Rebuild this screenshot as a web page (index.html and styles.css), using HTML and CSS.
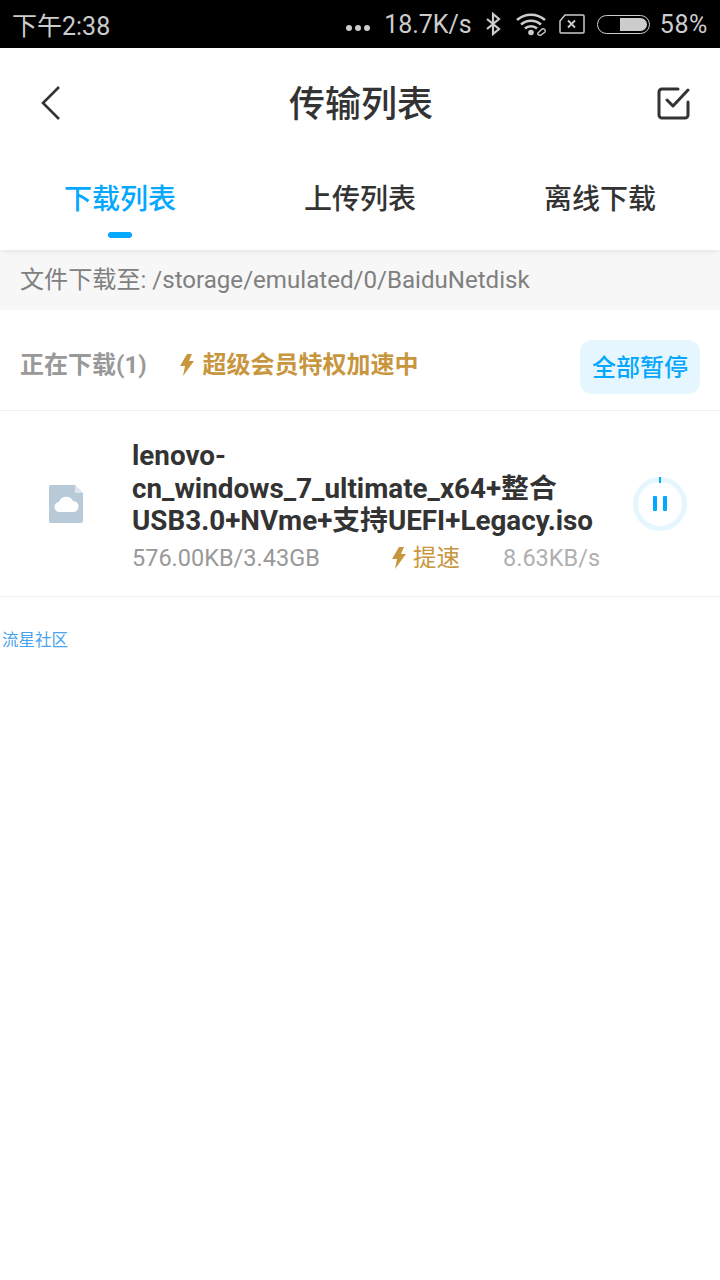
FILE: index.html
```html
<!DOCTYPE html>
<html lang="zh-CN">
<head>
    <meta charset="UTF-8">
    <meta name="viewport" content="width=device-width, initial-scale=1.0">
    <title>传输列表</title>
    <link rel="stylesheet" href="styles.css">
</head>
<body>
    <!-- Status bar -->
    <div class="status">
        <span class="status-time">下午2:38</span>
        <div class="status-right">
            <span class="dots"><i></i><i></i><i></i></span>
            <span class="status-speed">18.7K/s</span>
            <svg class="ic-bt" width="16" height="24" viewBox="0 0 16 24" fill="none" stroke="#ccc" stroke-width="2.200"><path d="M2 7l12 10-6 5V2l6 5L2 17"/></svg>
            <svg class="ic-wifi" width="34" height="24" viewBox="0 0 34 24" fill="none" stroke="#ccc" stroke-width="2.600"><path d="M3 8c8-7 20-7 28 0M7 12.500c6-5 14-5 20 0M11 16.500c3-3 9-3 12 0"/><circle cx="17" cy="20.500" r="2.800" fill="#ccc" stroke="none"/><path d="M24 21l4-4c2-1 4 1 3 3l-4 3c-2 1-4-1-3-2z" stroke-width="1.400"/></svg>
            <svg class="ic-sim" width="26" height="22" viewBox="0 0 26 22" fill="none" stroke="#ccc" stroke-width="1.500"><path d="M6 2h18a1 1 0 0 1 1 1v16a1 1 0 0 1-1 1H2a1 1 0 0 1-1-1V8z"/><path d="M9 7.500l7 7M16 7.500l-7 7" stroke-width="1.800"/></svg>
            <span class="battery"><span class="battery-fill"></span></span>
            <span class="status-pct">58%</span>
        </div>
    </div>

    <!-- Title bar -->
    <header class="titlebar">
        <svg class="ic-back" width="22" height="36" viewBox="0 0 22 36" fill="none" stroke="#333" stroke-width="2.600"><path d="M19 2L3 18l16 16"/></svg>
        <h1>传输列表</h1>
        <svg class="ic-select" width="34" height="34" viewBox="0 0 34 34" fill="none" stroke="#333" stroke-width="3" stroke-linecap="round" stroke-linejoin="round"><path d="M22 3H6a3 3 0 0 0-3 3v23a3 3 0 0 0 3 3h23a3 3 0 0 0 3-3V16"/><path d="M11 14l6 6L32 4"/></svg>
    </header>

    <!-- Tabs -->
    <nav class="tabs">
        <div class="tab tab-active">下载列表</div>
        <div class="tab">上传列表</div>
        <div class="tab">离线下载</div>
    </nav>

    <div class="path">文件下载至: /storage/emulated/0/BaiduNetdisk</div>

    <!-- Section heading -->
    <div class="section">
        <span class="section-label">正在下载(1)</span>
        <span class="boost">
            <svg class="bolt bolt-section" width="14" height="22" viewBox="0 0 14 22"><path d="M7 0h5L9 7h5L3 22l2-10H0z" fill="#c8963e"/></svg>
            超级会员特权加速中
        </span>
        <button class="pause-all">全部暂停</button>
    </div>

    <!-- Download row -->
    <div class="item">
        <div class="item-icon">
            <svg width="34" height="38" viewBox="0 0 34 38">
                <path d="M2 0h24l8 8v28a2 2 0 0 1-2 2H2a2 2 0 0 1-2-2V2a2 2 0 0 1 2-2z" fill="#b8c9d7"/>
                <path d="M26 0l8 8h-8z" fill="#dde6ee"/>
                <path d="M11 27a5 5 0 0 1-1-10 7.500 7.500 0 0 1 14-1 5.500 5.500 0 0 1 0 11z" fill="#fff"/>
            </svg>
        </div>
        <div class="item-body">
            <div class="item-name">lenovo-<br>cn_windows_7_ultimate_x64+整合<br>USB3.0+NVme+支持UEFI+Legacy.iso</div>
            <div class="item-meta">
                <span class="item-size">576.00KB/3.43GB</span>
                <span class="item-boost">
                    <svg class="bolt" width="14" height="22" viewBox="0 0 14 22"><path d="M7 0h5L9 7h5L3 22l2-10H0z" fill="#c8963e"/></svg>
                    提速
                </span>
                <span class="item-speed">8.63KB/s</span>
            </div>
        </div>
        <div class="progress">
            <span class="progress-tick"></span>
            <span class="pause-bar"></span>
            <span class="pause-bar"></span>
        </div>
    </div>

    <div class="watermark">流星社区</div>
</body>
</html>
```

FILE: styles.css
```css
body {
    margin: 0;
    background: #fff;
    font-family: Roboto, "Noto Sans CJK SC", sans-serif;
    color: #333;
}
.status {
    height: 48px;
    background: #000;
    color: #ccc;
    display: flex;
    align-items: center;
    justify-content: space-between;
    padding: 0 12px;
    font-size: 25px;
}
.status-right {
    display: flex;
    align-items: center;
}
.dots {
    display: flex;
    gap: 3px;
    margin: 8px 14px 0 0;
}
.dots i {
    width: 6px;
    height: 6px;
    border-radius: 50%;
    background: #ccc;
}
.ic-bt {
    margin: 0 13px 0 13px;
}
.ic-sim {
    margin: 0 12px 0 11px;
}
.status-pct {
    letter-spacing: 0.6px;
}
.battery {
    box-sizing: border-box;
    width: 53px;
    height: 19px;
    border: 1.5px solid #ccc;
    border-radius: 10px;
    margin-right: 10px;
    display: flex;
    justify-content: flex-end;
    padding: 2px;
}
.battery-fill {
    width: 27px;
    background: #ccc;
    border-radius: 0 7px 7px 0;
}
.titlebar {
    height: 110px;
    display: flex;
    align-items: center;
    justify-content: space-between;
    padding: 0 30px 0 40px;
}
.titlebar h1 {
    margin: 0 0 4px 4px;
    font-size: 36px;
    font-weight: 500;
}
.tabs {
    height: 92px;
    display: flex;
    box-shadow: 0 4px 5px -2px rgba(0, 0, 0, 0.07);
    position: relative;
}
.tab {
    flex: 1;
    text-align: center;
    font-size: 28px;
    font-weight: 500;
    padding-top: 23px;
    line-height: 38px;
    position: relative;
}
.tab-active {
    color: #06a7ff;
}
.tab-active::after {
    content: "";
    position: absolute;
    left: 108px;
    top: 74px;
    width: 24px;
    height: 6px;
    border-radius: 3px;
    background: #06a7ff;
}
.path {
    height: 60px;
    line-height: 60px;
    padding-left: 20px;
    background: #f7f7f7;
    color: #808080;
    font-size: 24.1px;
}
.section {
    box-sizing: border-box;
    height: 101px;
    display: flex;
    align-items: center;
    padding: 4px 20px 0 20px;
    border-bottom: 1px solid #eee;
    font-size: 24px;
    font-weight: 700;
}
.section-label {
    color: #999;
}
.boost {
    color: #c8963e;
    margin-left: 33px;
    display: flex;
    align-items: center;
    gap: 9px;
}
.bolt-section {
    margin-top: 6px;
}
.pause-all {
    margin: 10px 0 0 auto;
    width: 120px;
    height: 54px;
    border: none;
    border-radius: 12px;
    padding: 0 0 4px;
    background: #e5f6ff;
    color: #06a7ff;
    font: inherit;
    font-weight: 500;
}
.item {
    height: 185px;
    display: flex;
    align-items: center;
    border-bottom: 1px solid #eee;
}
.item-icon {
    width: 132px;
    padding-left: 49px;
    box-sizing: border-box;
    display: flex;
}
.item-body {
    width: 480px;
    padding-top: 9px;
}
.item-name {
    font-size: 27.8px;
    font-weight: 700;
    line-height: 32.5px;
    white-space: nowrap;
}
.item-meta {
    display: flex;
    align-items: center;
    font-size: 23.5px;
    line-height: 36px;
    margin-top: 2px;
    color: #999;
}
.item-size {
    width: 260px;
}
.item-boost {
    width: 111px;
    color: #c8963e;
    display: flex;
    align-items: center;
    gap: 7px;
}
.item-speed {
    color: #b0b0b0;
}
.progress {
    width: 44px;
    height: 44px;
    margin-left: 21px;
    border: 5px solid #e5f6ff;
    border-radius: 50%;
    display: flex;
    align-items: center;
    justify-content: center;
    gap: 6px;
    position: relative;
}
.progress-tick {
    position: absolute;
    top: -5px;
    left: 21px;
    width: 2px;
    height: 6px;
    background: #06a7ff;
}
.pause-bar {
    width: 4px;
    height: 15px;
    border-radius: 1px;
    background: #06a7ff;
}
.watermark {
    margin: 30px 0 0 2px;
    font-size: 16.5px;
    color: #4aa3f0;
}
```
